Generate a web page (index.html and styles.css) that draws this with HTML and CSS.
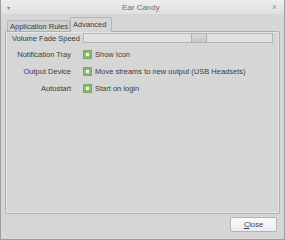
FILE: index.html
```html
<!DOCTYPE html>
<html lang="en">
<head>
    <meta charset="UTF-8">
    <link rel="stylesheet" href="styles.css">
    <title>Ear Candy</title>
</head>
<body>
<div class="window">
    <div class="titlebar">
        <span class="menu-arrow">&#9662;</span>
        <span class="title">Ear Candy</span>
        <span class="close-x">&#215;</span>
    </div>
    <div class="content">
        <div class="tabs">
            <div class="tab">Application Rules</div>
            <div class="tab active">Advanced</div>
        </div>
        <div class="panel">
            <div class="row first">
                <span class="label left">Volume Fade Speed</span>
                <div class="slider"><div class="handle"></div></div>
            </div>
            <div class="row">
                <span class="label">Notification Tray</span>
                <span class="check"></span>
                <span class="text">Show Icon</span>
            </div>
            <div class="row">
                <span class="label">Output Device</span>
                <span class="check"></span>
                <span class="text">Move streams to new output (USB Headsets)</span>
            </div>
            <div class="row">
                <span class="label">Autostart</span>
                <span class="check"></span>
                <span class="text">Start on login</span>
            </div>
        </div>
        <div class="footer">
            <button class="btn"><u>C</u>lose</button>
        </div>
    </div>
</div>
</body>
</html>
```

FILE: styles.css
```css
* {
    box-sizing: border-box;
}

body {
    margin: 0;
    background: #d6d6d6;
    font-family: "Liberation Sans", Arial, sans-serif;
    font-size: 7.5px;
    color: #3c3c3c;
}

.window {
    width: 285px;
    height: 240px;
    border: 1px solid #9c9c9c;
    border-top: none;
    display: flex;
    flex-direction: column;
    background: #d6d6d6;
}

.titlebar {
    height: 14px;
    display: flex;
    align-items: center;
    justify-content: space-between;
    padding: 0 7px 0 6px;
    background: linear-gradient(#ededed, #e0e0e0);
    color: #6e6e6e;
    font-size: 8px;
}

.menu-arrow {
    font-size: 6px;
    color: #888;
}

.close-x {
    font-size: 9px;
    color: #999;
}

.content {
    flex: 1;
    display: flex;
    flex-direction: column;
    padding: 2px 4px 7px 4px;
}

.tabs {
    display: flex;
    align-items: flex-end;
    height: 15px;
    padding-left: 2px;
}

.tab {
    border: 1px solid #b4b4b4;
    border-bottom: none;
    background: #d0d0d0;
    height: 11px;
    padding: 0 1px 0 2px;
    line-height: 11px;
    border-radius: 2px 2px 0 0;
    white-space: nowrap;
}

.tab.active {
    height: 15px;
    line-height: 13px;
    background: #d6d6d6;
    padding: 0 5px 0 2px;
    margin-bottom: -1px;
    position: relative;
    z-index: 1;
}

.panel {
    height: 183px;
    border: 1px solid #b0b0b0;
    box-shadow: inset 1px 1px 0 #e6e6e6, inset -1px -1px 0 #e6e6e6;
    border-radius: 2px;
    padding: 1px 5px 0 5px;
}

.row {
    display: flex;
    align-items: center;
    height: 17px;
    white-space: nowrap;
}

.row.first {
    height: 10px;
    margin-bottom: 3px;
}

.label {
    width: 60px;
    text-align: right;
    margin-right: 12px;
}

.label.left {
    text-align: left;
    margin-right: 0;
    width: 72px;
    padding-left: 1px;
}

.slider {
    flex: 1;
    height: 10px;
    margin-right: 1px;
    border: 1px solid #b4b4b4;
    background: #e2e2e2;
    position: relative;
}

.handle {
    position: absolute;
    left: 107px;
    top: -1px;
    width: 16px;
    height: 10px;
    border: 1px solid #b0b0b0;
    background: linear-gradient(#d8d8d8, #c6c6c6);
}

.check {
    width: 9px;
    height: 9px;
    background: #8fb96a;
    border: 1px solid #7fa55c;
    margin-right: 3px;
    display: flex;
    align-items: center;
    justify-content: center;
}

.check::after {
    content: "";
    width: 3px;
    height: 3px;
    background: #f4f8ee;
}

.footer {
    display: flex;
    justify-content: flex-end;
    padding-top: 3px;
    padding-right: 3px;
}

.btn {
    width: 47px;
    height: 15px;
    font-family: inherit;
    font-size: 7.5px;
    color: #3c3c3c;
    border: 1px solid #b4b4b4;
    border-radius: 2px;
    background: linear-gradient(#fbfbfb, #ececec);
    padding: 0;
}
```
